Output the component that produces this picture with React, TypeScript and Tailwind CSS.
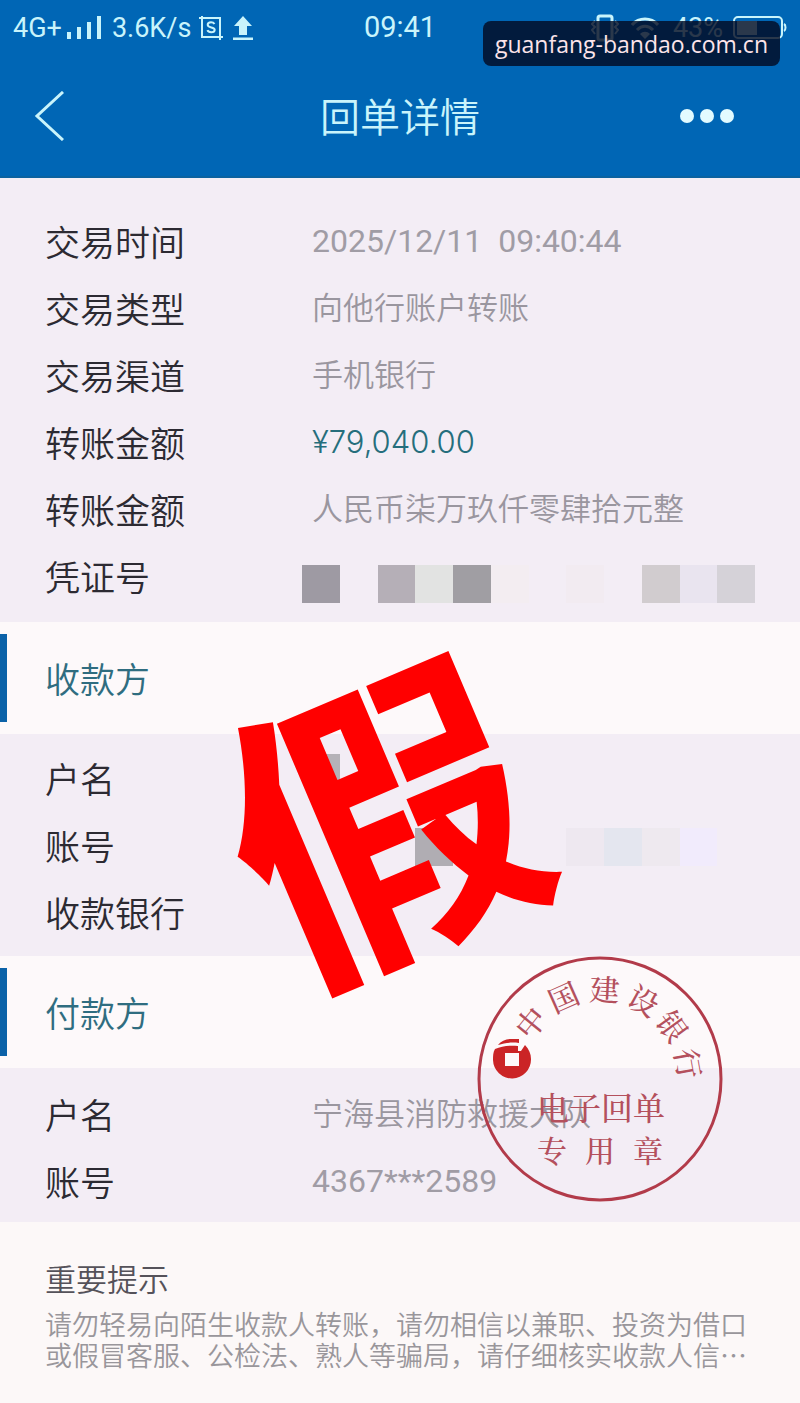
import type { ReactNode } from "react";

interface RowProps {
  label: string;
  children?: ReactNode;
}

const details = [
  {
    label: "交易时间",
    value: "2025/12/11  09:40:44",
    className: "font-['Roboto',sans-serif] text-[32px] font-normal text-[#a09ca5]",
  },
  { label: "交易类型", value: "向他行账户转账", className: "text-[#9a969f]" },
  { label: "交易渠道", value: "手机银行", className: "text-[#9a969f]" },
  { label: "转账金额", value: "¥79,040.00", className: "text-[#256e7c]" },
  { label: "转账金额", value: "人民币柒万玖仟零肆拾元整", className: "text-[#9a969f]" },
];

// One class per mosaic block, left to right
const voucherMosaic = [
  "bg-[#9e9aa3]",
  "",
  "bg-[#b5afb7]",
  "bg-[#e2e3e2]",
  "bg-[#a09ea3]",
  "bg-[#f3edf1]",
  "",
  "bg-[#f2ebf1]",
  "",
  "bg-[#d1cccf]",
  "bg-[#e9e4ef]",
  "bg-[#d5d2d8]",
];

const accountMosaic = [
  "",
  "",
  "",
  "bg-[#b0adb3]",
  "",
  "",
  "",
  "bg-[#eee8f0]",
  "bg-[#e4e6ef]",
  "bg-[#eee9ef]",
  "bg-[#f1ebfc]",
  "",
];

const sealName = [
  { char: "中", angle: -51 },
  { char: "国", angle: -24 },
  { char: "建", angle: 3 },
  { char: "设", angle: 29 },
  { char: "银", angle: 54 },
  { char: "行", angle: 80 },
];

function Row({ label, children }: RowProps) {
  return (
    <div className="flex h-[67px] items-center">
      <dt className="w-[267px] shrink-0 text-[35px] leading-10 text-[#2c2a32]">{label}</dt>
      <dd className="min-w-0 flex-1 pb-1 text-[31px] leading-10">{children}</dd>
    </div>
  );
}

function SectionTitle({ children }: { children: ReactNode }) {
  return (
    <div className="flex h-28 items-center bg-[#fdf9fa]">
      <span className="h-[88px] w-[7px] bg-[#0b62a8]" />
      <h2 className="pt-1 pl-[38px] text-[35px] leading-10 text-[#2f6d80]">{children}</h2>
    </div>
  );
}

function Mosaic({ blocks, className }: { blocks: string[]; className: string }) {
  return (
    <div className={`-ml-[10px] grid w-[453px] grid-cols-12 ${className}`} aria-hidden="true">
      {blocks.map((block, i) => (
        <span key={i} className={`h-[38px] ${block}`} />
      ))}
    </div>
  );
}

function StatusBar() {
  return (
    <div className="flex h-14 items-center px-[13px] font-['Roboto','Noto_Sans_CJK_SC',sans-serif] text-[27px] font-normal text-[#c9f4fb]">
      <div className="flex flex-1 items-center">
        <span>4G+</span>
        <svg className="ml-1 h-6 w-9" viewBox="0 0 36 24" fill="currentColor">
          <rect x="1" y="16" width="4" height="7" />
          <rect x="11" y="11" width="4" height="12" />
          <rect x="21" y="6" width="4" height="17" />
          <rect x="31" y="0" width="4" height="23" />
        </svg>
        <span className="ml-[10px]">3.6K/s</span>
        <svg className="ml-2 size-6" viewBox="0 0 24 24" fill="none" stroke="currentColor" strokeWidth="2">
          <path d="M0 2h21v22M3 0v21h21" />
          <path d="M15.500 8c-.8-1.300-2-1.700-3.500-1.700-2 0-3.300 1-3.300 2.500 0 3.600 7 1.700 7 5 0 1.600-1.500 2.500-3.500 2.500-1.800 0-3.200-.7-3.800-2.100" />
        </svg>
        <svg className="ml-[10px] h-6 w-5" viewBox="0 0 20 24" fill="currentColor">
          <path d="M10 0l9 10h-5v9H6v-9H1zM0 21.500h20V24H0z" />
        </svg>
      </div>
      <span className="text-[29px]">09:41</span>
      <div className="flex flex-1 items-center justify-end">
        <svg className="h-7 w-7" viewBox="0 0 28 28" fill="none" stroke="currentColor" strokeWidth="2">
          <rect x="7" y="2" width="14" height="24" rx="2" strokeWidth="3" />
          <path d="M4 7L1 10l3 3-3 3 3 4M24 7l3 3-3 3 3 3-3 4" />
        </svg>
        <svg className="ml-3 h-6 w-7" viewBox="0 0 28 24" fill="none" stroke="currentColor" strokeWidth="3">
          <path d="M1 9C8 1 20 1 27 9M6 14c5-5 11-5 16 0" />
          <path d="M14 23l-5-5c3-3 7-3 10 0z" fill="currentColor" stroke="none" />
        </svg>
        <span className="ml-[14px]">43%</span>
        <svg className="ml-[10px] h-6 w-[54px]" viewBox="0 0 54 24" fill="none" stroke="currentColor" strokeWidth="2">
          <rect x="1" y="1" width="48" height="21" rx="4" />
          <path d="M51 8c2 1 2 6 0 7" />
          <rect x="4" y="5" width="20" height="14" fill="currentColor" stroke="none" />
        </svg>
      </div>
    </div>
  );
}

function Seal() {
  return (
    <svg
      className="pointer-events-none absolute -top-[112px] right-[77px] size-[246px]"
      viewBox="0 0 246 246"
      role="img"
      aria-label="电子回单专用章"
    >
      <circle cx="123" cy="123" r="121" fill="none" stroke="#b23b4a" strokeWidth="3" />
      <g
        fill="#b4505d"
        fontFamily="'Noto Serif CJK SC', 'Noto Sans CJK SC', serif"
        fontWeight="500"
        textAnchor="middle"
      >
        {sealName.map(({ char, angle }) => (
          <text key={char} x="123" y="45" fontSize="30" transform={`rotate(${angle} 123 123)`}>
            {char}
          </text>
        ))}
        <text x="124" y="164" fontSize="32">
          电子回单
        </text>
        <text x="75" y="206" fontSize="30">
          专
        </text>
        <text x="123" y="206" fontSize="30">
          用
        </text>
        <text x="171" y="206" fontSize="30">
          章
        </text>
      </g>
      {/* Bank mark: coin with a square hole, cut at the top right */}
      <g fill="#cb2426">
        <path d="M21 89c3-4 8-6 13-6h8v4c-8-1-14 0-21 2z" />
        <path
          fillRule="evenodd"
          d="M18 93c7-3 15-4 23-3v5h3l4-6c4 4 6 9 6 14a19 19 0 0 1-38 1c0-4 0-8 2-11zM28 97v13h14V97z"
        />
      </g>
    </svg>
  );
}

export default function App() {
  return (
    <div className="relative min-h-screen w-full overflow-hidden bg-[#fcf8f8] font-['Inter','Noto_Sans_CJK_SC',sans-serif] font-[350]">
      <header className="border-b-2 border-[#0b62a0] bg-[#0066b5] text-[#c9f4fb]">
        <StatusBar />
        <div className="flex h-[120px] items-center justify-between px-8">
          <button type="button" aria-label="返回" className="flex w-24">
            <svg className="h-[50px] w-8" viewBox="0 0 32 50" fill="none" stroke="currentColor" strokeWidth="3">
              <path d="M31 1L5 25l26 24" />
            </svg>
          </button>
          <h1 className="pt-1 text-[40px] leading-[56px]">回单详情</h1>
          <button type="button" aria-label="更多" className="flex w-24 justify-end gap-[6px] pr-[34px]">
            <span className="size-[14px] rounded-full bg-[#e2fbff]" />
            <span className="size-[14px] rounded-full bg-[#e2fbff]" />
            <span className="size-[14px] rounded-full bg-[#e2fbff]" />
          </button>
        </div>
      </header>

      {/* Source label */}
      <div className="absolute top-[21px] right-5 rounded-lg bg-[#02091f]/80 px-3 pt-[7px] pb-[5px] font-['Open_Sans',sans-serif] text-[23px] font-normal leading-[33px] text-[#fce4ea]">
        guanfang-bandao.com.cn
      </div>

      <main>
        {/* Transaction */}
        <dl className="bg-[#f3edf5] pt-[31px] pr-5 pb-[11px] pl-[45px]">
          {details.map((item, i) => (
            <Row key={i} label={item.label}>
              <span className={`whitespace-pre ${item.className}`}>{item.value}</span>
            </Row>
          ))}
          <Row label="凭证号">
            <Mosaic blocks={voucherMosaic} className="pt-4" />
          </Row>
        </dl>

        {/* Payee */}
        <SectionTitle>收款方</SectionTitle>
        <section className="relative">
          <dl className="bg-[#f3edf5] pt-3 pr-5 pb-[9px] pl-[45px]">
            <Row label="户名">
              <span className="-mt-4 -ml-[2px] block h-8 w-[30px] bg-[#b5b2b8]" />
            </Row>
            <Row label="账号">
              <Mosaic blocks={accountMosaic} className="pt-1" />
            </Row>
            <Row label="收款银行" />
          </dl>
          <div className="pointer-events-none absolute top-[93px] left-[48%] z-10 -translate-x-1/2 -translate-y-1/2 -rotate-[23deg] text-[305px] leading-none font-bold text-[#ff0000]">
            假
          </div>
        </section>

        {/* Payer */}
        <SectionTitle>付款方</SectionTitle>
        <section className="relative">
          <dl className="bg-[#f3edf5] pt-[14px] pr-5 pb-[6px] pl-[45px]">
            <Row label="户名">
              <span className="text-[#9a969f]">宁海县消防救援大队</span>
            </Row>
            <Row label="账号">
              <span className="font-['Roboto',sans-serif] text-[32px] font-normal text-[#a09ca5]">4367***2589</span>
            </Row>
          </dl>
          <Seal />
        </section>
      </main>

      <footer className="px-[45px] pt-[34px] pb-7 font-['Noto_Sans_CJK_SC',sans-serif]">
        <h3 className="text-[31px] leading-[44px] text-[#55525a]">重要提示</h3>
        <p className="mt-2 text-[27px] leading-[31px] text-[#99969b]">
          请勿轻易向陌生收款人转账，请勿相信以兼职、投资为借口
          <br />
          或假冒客服、公检法、熟人等骗局，请仔细核实收款人信⋯
        </p>
      </footer>
    </div>
  );
}
